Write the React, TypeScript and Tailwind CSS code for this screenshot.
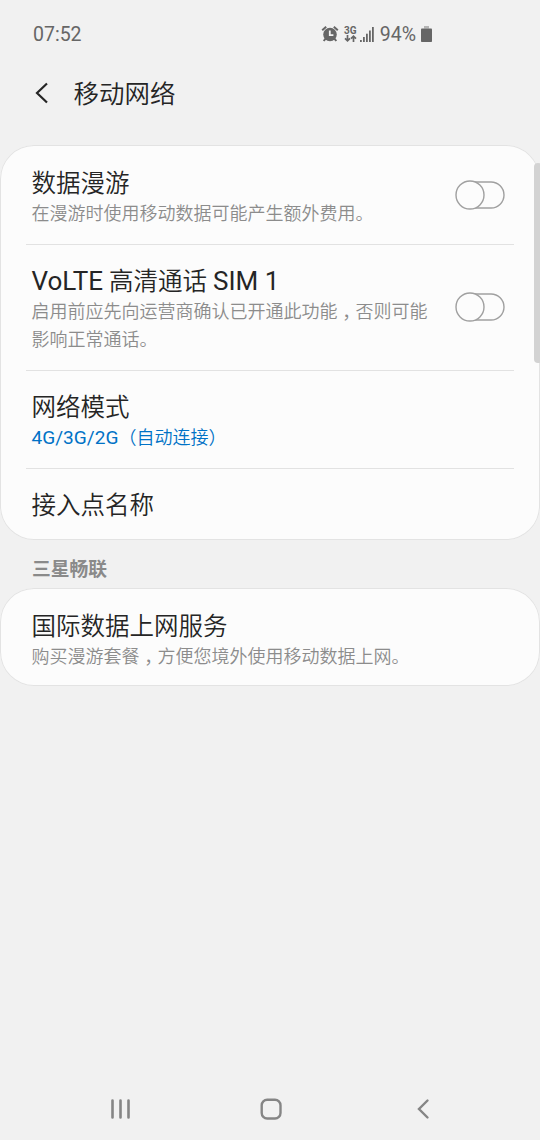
import type { ReactNode } from "react";

const AlarmIcon = () => (
	<svg width="18" height="18" viewBox="0 0 18 18" fill="none">
		<circle cx="9" cy="9.5" r="6.8" fill="#666" />
		<path d="M1.2 5.2 5.2 1.7M16.8 5.2 12.8 1.7" stroke="#666" strokeWidth="2" />
		<path d="M4.6 13.6 2.7 16M13.4 13.6l1.9 2.4" stroke="#666" strokeWidth="2" />
		<path d="M8.8 5.4v4.7h3.6" stroke="#f1f1f1" strokeWidth="1.8" />
	</svg>
);

const DataIcon = () => (
	<div className="flex w-[13px] flex-col items-center">
		<span className="text-[10px] leading-[9px] font-bold">3G</span>
		<svg width="13" height="7" viewBox="0 0 13 7" fill="none" stroke="#666" strokeWidth="1.7">
			<path d="M3.5 0v5.5M1 3.3l2.5 2.5L6 3.3" />
			<path d="M9.5 7V1.5M7 3.7l2.5-2.5L12 3.7" />
		</svg>
	</div>
);

const SignalIcon = () => (
	<svg width="14" height="15" viewBox="0 0 14 15" fill="#666">
		<rect x="0" y="13" width="1.8" height="2" />
		<rect x="3" y="10" width="1.8" height="5" />
		<rect x="6" y="6.7" width="1.8" height="8.3" />
		<rect x="9" y="3.5" width="1.8" height="11.5" />
		<rect x="12" y="0" width="1.8" height="15" />
	</svg>
);

const BatteryIcon = () => (
	<svg width="11" height="16" viewBox="0 0 11 16">
		<rect x="3" y="0" width="5" height="2.5" fill="#b5b5b5" />
		<rect x="0" y="2.5" width="11" height="13.5" rx="0.8" fill="#666" />
	</svg>
);

const Toggle = () => (
	<svg className="mt-px mr-[35px] shrink-0" width="50" height="30" viewBox="0 0 50 30" fill="#fcfcfc" stroke="#a0a0a0" strokeWidth="1.4">
		<rect x="2" y="2" width="47" height="26" rx="13" />
		<circle cx="15" cy="15" r="14" />
	</svg>
);

// full width comma sits in the middle of its cell
const Comma = () => <span className="relative top-[6px] font-['Noto_Sans_CJK_TC',sans-serif] leading-[0] font-normal" lang="zh-TW">，</span>;

type RowProps = {
	title: ReactNode;
	children?: ReactNode;
	accent?: boolean;
	toggle?: boolean;
};

const Row = ({ title, children, accent, toggle }: RowProps) => {
	return (
		<li className="group relative flex items-center pl-[31.5px]">
			<div className={"flex-1 " + (children ? "pt-6 pb-[15px]" : "pt-6 pb-[19px]")}>
				<div className="h-[30px] text-[24.5px] leading-[30px] whitespace-nowrap text-[#252525]">{title}</div>
				{children && (
					<div className={"mt-px text-[18px] leading-[28px] whitespace-nowrap " + (accent ? "h-7 text-[#0072c6]" : "text-[#8c8c8c]")}>
						{children}
					</div>
				)}
			</div>
			{toggle && <Toggle />}
			<div className="absolute right-[26px] -bottom-0.5 left-[26px] h-[1.5px] bg-[#e2e2e2] group-last:hidden"></div>
		</li>
	);
};

const Card = ({ children }: { children: ReactNode }) => (
	<ul className="rounded-[34px] bg-[#fcfcfc] ring-1 ring-[#e3e3e3] ring-inset">{children}</ul>
);

const App = () => {
	return (
		<div className="relative flex h-[1140px] w-[540px] flex-col overflow-hidden bg-[#f1f1f1] font-[Roboto,'Noto_Sans_CJK_SC',sans-serif] font-[350]">
			<header className="flex h-[69px] items-center justify-between pr-[108px] pl-[33px] text-[19.5px] font-normal text-[#666]">
				<span>07:52</span>
				<div className="flex items-center">
					<div className="-mt-0.5"><AlarmIcon /></div>
					<div className="-mt-0.5 ml-[5px]"><DataIcon /></div>
					<div className="ml-[3px]"><SignalIcon /></div>
					<span className="ml-[6px]">94%</span>
					<div className="-mt-0.5 ml-[5px]"><BatteryIcon /></div>
				</div>
			</header>

			<div className="flex h-[50px] items-center pl-[35px]">
				<svg className="-mt-0.5" width="14" height="22" viewBox="0 0 14 22" fill="none" stroke="#252525" strokeWidth="2.2">
					<path d="M12 1.5 2 11l10 9.5" />
				</svg>
				<h1 className="ml-[24.5px] text-[25.5px] leading-[30px] font-[350] text-[#252525]">移动网络</h1>
			</div>

			<main className="mt-[26px]">
				<Card>
					<Row title="数据漫游" toggle>在漫游时使用移动数据可能产生额外费用。</Row>
					<Row
						title={<><span className="text-[26px] leading-none font-normal">VoLTE</span> 高清通话 <span className="text-[26px] leading-none font-normal">SIM 1</span></>}
						toggle
					>
						启用前应先向运营商确认已开通此功能<Comma />否则可能<br />影响正常通话。
					</Row>
					<Row title="网络模式" accent><span className="text-[19.1px] leading-none font-normal">4G/3G/2G</span>（自动连接）</Row>
					<Row title="接入点名称" />
				</Card>
				<h2 className="flex h-12 items-center pt-3 pl-8 text-[18.8px] font-bold text-[#8a8a8a]">三星畅联</h2>
				<Card>
					<Row title="国际数据上网服务">
						购买漫游套餐<Comma />方便您境外使用移动数据上网。
					</Row>
				</Card>
			</main>

			<div className="absolute top-[163px] -right-0.5 h-[200px] w-2 rounded-[6px] bg-[#d3d3d3]"></div>

			<nav className="mt-auto flex h-[62px] items-center pl-[110px]">
				<svg width="21" height="22" viewBox="0 0 21 22" fill="none" stroke="#858585" strokeWidth="2.6" strokeLinecap="round">
					<path d="M2.5 2.5v17M10.5 2.5v17M18.5 2.5v17" />
				</svg>
				<svg className="ml-[129px]" width="22" height="22" viewBox="0 0 22 22" fill="none" stroke="#858585" strokeWidth="2.4">
					<rect x="1.7" y="1.7" width="18.8" height="18.8" rx="5.5" />
				</svg>
				<svg className="ml-[134px]" width="14" height="22" viewBox="0 0 14 22" fill="none" stroke="#858585" strokeWidth="2.4" strokeLinecap="round">
					<path d="M11.5 2.5 3 11l8.5 8.5" />
				</svg>
			</nav>
		</div>
	);
};

export default App;
